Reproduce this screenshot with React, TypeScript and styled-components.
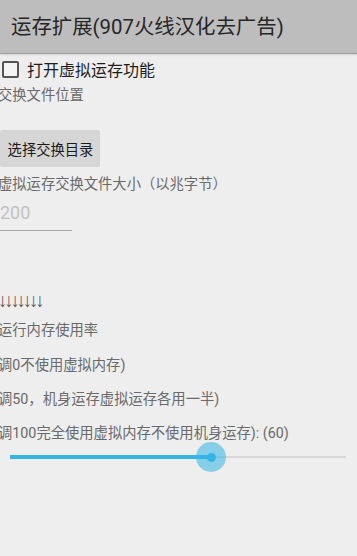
import React from "react";
import styled, { createGlobalStyle } from "styled-components";

const Global = createGlobalStyle`
  html, body { margin: 0; padding: 0; background: #eeeeee; }
  body { font-family: Roboto, "Noto Sans CJK SC", sans-serif; overflow: hidden; }
  * { box-sizing: border-box; }
`;

const Screen = styled.div`
  width: 357px;
  height: 556px;
  background: #eeeeee;
  display: flex;
  flex-direction: column;
  overflow: hidden;
`;

const Header = styled.div`
  height: 54px;
  background: #bdbdbd;
  border-bottom: 1px solid #9e9e9e;
  box-shadow: 0 1px 2px rgba(0, 0, 0, 0.12);
  display: flex;
  align-items: center;
  padding-left: 11px;
  padding-bottom: 3px;
  flex-shrink: 0;
`;

const Title = styled.h1`
  margin: 0;
  font-size: 20.4px;
  font-weight: 400;
  color: #262626;
  font-family: Roboto, "Noto Sans CJK SC", sans-serif;
`;

const Body = styled.div`
  display: flex;
  flex-direction: column;
  align-items: flex-start;
`;

const CheckRow = styled.label`
  display: flex;
  align-items: center;
  gap: 8px;
  margin-top: 6px;
  margin-left: 2px;
  height: 18px;
`;

const Box = styled.span`
  width: 17px;
  height: 17px;
  border: 2px solid #555;
  border-radius: 2px;
  background: #f4f4f4;
`;

const CheckText = styled.span`
  font-size: 16px;
  color: #1c1c1c;
`;

const Label = styled.div<{ $top: number }>`
  margin-top: ${(p) => p.$top}px;
  margin-left: -2px;
  font-size: 14.3px;
  line-height: 20px;
  color: #6a6a6a;
  white-space: nowrap;
`;

const Button = styled.button`
  margin-top: 25px;
  width: 100px;
  height: 37px;
  border: none;
  border-radius: 2px;
  background: #d6d6d6;
  color: #1a1a1a;
  font-family: Roboto, "Noto Sans CJK SC", sans-serif;
  font-size: 14.3px;
  padding: 0 0 0 1px;
  text-align: center;
`;

const Field = styled.div`
  margin-top: 5px;
  width: 72px;
  height: 32px;
  border-bottom: 1px solid #a8a8a8;
  display: flex;
  align-items: center;
  font-size: 18px;
  color: #c2c2c2;
  padding-bottom: 4px;
`;

const Arrows = styled.div`
  margin-top: 60px;
  margin-left: -2px;
  font-family: "Liberation Sans", sans-serif;
  font-size: 19px;
  line-height: 20px;
  height: 20px;
  color: #5a5a5a;
  letter-spacing: -3.3px;
`;

const SliderWrap = styled.div`
  margin-top: -2px;
  margin-left: 10px;
  width: 336px;
  height: 32px;
  position: relative;
  display: flex;
  align-items: center;
`;

const Track = styled.div`
  width: 100%;
  height: 2px;
  background: #d6d6d6;
  position: relative;
`;

const Fill = styled.div`
  position: absolute;
  left: 0;
  top: -1px;
  height: 4px;
  background: #33b5e5;
`;

const Thumb = styled.div`
  position: absolute;
  top: 50%;
  width: 30px;
  height: 30px;
  margin-left: -15px;
  margin-top: -15px;
  border-radius: 50%;
  background: rgba(51, 181, 229, 0.55);
  display: flex;
  align-items: center;
  justify-content: center;
  &::after {
    content: "";
    width: 9px;
    height: 9px;
    border-radius: 50%;
    background: #33b5e5;
  }
`;

export default function App() {
  const pct = 201 / 336;
  return (
    <Screen>
      <Global />
      <Header>
        <Title>运存扩展(907火线汉化去广告)</Title>
      </Header>
      <Body>
        <CheckRow>
          <Box />
          <CheckText>打开虚拟运存功能</CheckText>
        </CheckRow>
        <Label $top={7}>交换文件位置</Label>
        <Button>选择交换目录</Button>
        <Label $top={7}>虚拟运存交换文件大小（以兆字节）</Label>
        <Field>200</Field>
        <Arrows>{"\u2193\u2193\u2193\u2193\u2193\u2193\u2193"}</Arrows>
        <Label $top={9}>运行内存使用率</Label>
        <Label $top={15}>调0不使用虚拟内存)</Label>
        <Label $top={14}>调50，机身运存虚拟运存各用一半)</Label>
        <Label $top={14}>调100完全使用虚拟内存不使用机身运存): (60)</Label>
        <SliderWrap>
          <Track>
            <Fill style={{ width: `${pct * 100}%` }} />
          </Track>
          <Thumb style={{ left: `${pct * 100}%` }} />
        </SliderWrap>
      </Body>
    </Screen>
  );
}
